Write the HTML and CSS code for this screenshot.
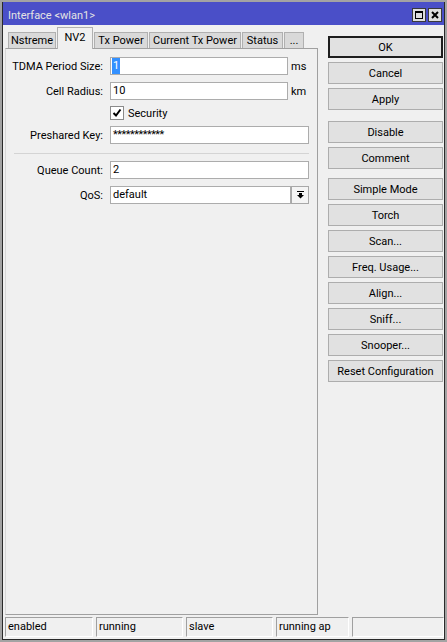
FILE: index.html
```html
<!DOCTYPE html>
<html>
<head>
<meta charset="utf-8">
<title>Interface &lt;wlan1&gt;</title>
<link rel="stylesheet" href="styles.css">
</head>
<body>
<div class="window">
  <div class="titlebar">
    <span class="title">Interface &lt;wlan1&gt;</span>
    <div class="tbtns">
      <span class="tbtn"><svg width="8" height="8" viewBox="0 0 8 8"><rect x="0.5" y="1" width="7" height="6.5" fill="none" stroke="#000" stroke-width="1"/><rect x="0" y="0" width="8" height="2" fill="#000"/></svg></span>
      <span class="tbtn"><svg width="8" height="8" viewBox="0 0 8 8"><path d="M1 1 L7 7 M7 1 L1 7" stroke="#000" stroke-width="2"/></svg></span>
    </div>
  </div>
  <div class="main">
    <div class="left">
      <div class="tabs">
        <span class="tab t-nstreme">Nstreme</span>
        <span class="tab active t-nv2">NV2</span>
        <span class="tab t-txp">Tx Power</span>
        <span class="tab t-ctxp">Current Tx Power</span>
        <span class="tab t-status">Status</span>
        <span class="tab t-more">...</span>
      </div>
      <div class="panel">
        <div class="row">
          <span class="label">TDMA Period Size:</span>
          <span class="input w-short"><span class="sel">1</span></span>
          <span class="unit">ms</span>
        </div>
        <div class="row gap7">
          <span class="label">Cell Radius:</span>
          <span class="input w-short">10</span>
          <span class="unit">km</span>
        </div>
        <div class="check-row">
          <span class="checkbox"><svg width="10" height="10" viewBox="0 0 10 10"><path d="M1.5 5 L4 7.5 L8.5 1.5" fill="none" stroke="#000" stroke-width="2"/></svg></span>
          <span class="check-label">Security</span>
        </div>
        <div class="row gap6">
          <span class="label">Preshared Key:</span>
          <span class="input w-full pw">************</span>
        </div>
        <div class="sep"></div>
        <div class="row gap7">
          <span class="label">Queue Count:</span>
          <span class="input w-full">2</span>
        </div>
        <div class="row gap7">
          <span class="label">QoS:</span>
          <span class="input w-select">default</span>
          <span class="dd-btn"><svg width="7" height="8" viewBox="0 0 7 8"><rect x="0" y="0" width="7" height="1" fill="#000"/><rect x="2" y="2" width="3" height="2" fill="#000"/><path d="M0 4 L7 4 L3.5 7.5 Z" fill="#000"/></svg></span>
        </div>
      </div>
    </div>
    <div class="buttons">
      <div class="btn default">OK</div>
      <div class="btn">Cancel</div>
      <div class="btn group-end">Apply</div>
      <div class="btn">Disable</div>
      <div class="btn group-end2">Comment</div>
      <div class="btn">Simple Mode</div>
      <div class="btn">Torch</div>
      <div class="btn">Scan...</div>
      <div class="btn">Freq. Usage...</div>
      <div class="btn">Align...</div>
      <div class="btn">Sniff...</div>
      <div class="btn">Snooper...</div>
      <div class="btn">Reset Configuration</div>
    </div>
  </div>
  <div class="status">
    <span class="cell c1">enabled</span>
    <span class="cell c2">running</span>
    <span class="cell c3">slave</span>
    <span class="cell c4">running ap</span>
    <span class="cell c5"></span>
  </div>
</div>
</body>
</html>
```
FILE: styles.css
```css
* { box-sizing: border-box; }
html, body { margin: 0; padding: 0; }
body {
  width: 447px;
  height: 642px;
  overflow: hidden;
  background: #a3a3a3;
  font-family: Roboto, "Liberation Sans", sans-serif;
  font-size: 11px;
  color: #000;
}
.window {
  margin: 2px 0 0 2px;
  width: 443px;
  height: 638px;
  border: 1px solid #2a2a2a;
  border-top: none;
  background: #f0f0f0;
  display: flex;
  flex-direction: column;
}
.titlebar {
  height: 23px;
  flex-shrink: 0;
  background: #4a4fc8;
  display: flex;
  align-items: center;
  justify-content: space-between;
  padding: 3px 2px 0 5px;
}
.title { color: #e4e4e4; font-size: 11px; }
.tbtns { display: flex; gap: 2px; }
.tbtn {
  width: 14px;
  height: 14px;
  border: 1px solid #3a3a3a;
  background: #dedede;
  display: flex;
  align-items: center;
  justify-content: center;
}
.tbtn svg { display: block; }
.main { display: flex; height: 590px; flex-shrink: 0; }
.left {
  width: 315px;
  padding-left: 2px;
  display: flex;
  flex-direction: column;
}
.tabs {
  height: 23px;
  display: flex;
  align-items: flex-end;
  gap: 1px;
  padding-left: 3px;
}
.tab {
  height: 16px;
  border: 1px solid #b0b0b0;
  border-bottom: none;
  background: #d9d9d9;
  text-align: center;
  line-height: 15px;
  white-space: nowrap;
  flex-shrink: 0;
}
.tab.active {
  height: 22px;
  margin-bottom: -1px;
  background: #f0f0f0;
  position: relative;
  z-index: 1;
  line-height: 19px;
}
.t-nstreme { width: 48px; }
.t-nv2 { width: 36px; }
.t-txp { width: 54px; }
.t-ctxp { width: 92px; }
.t-status { width: 41px; }
.t-more { width: 20px; }
.panel {
  flex: 1;
  border: 1px solid #a0a0a0;
  border-left-color: #d8d8d8;
  padding-top: 8px;
}
.row { display: flex; align-items: center; height: 18px; }
.gap7 { margin-top: 7px; }
.gap6 { margin-top: 6px; }
.label { width: 97px; margin-right: 7px; text-align: right; white-space: nowrap; }
.input {
  height: 18px;
  border: 1px solid #acacac;
  background: #fff;
  padding-left: 2px;
  line-height: 16px;
  white-space: nowrap;
  overflow: hidden;
}
.w-short { width: 178px; }
.w-full { width: 199px; }
.w-select { width: 181px; }
.pw { letter-spacing: -0.5px; }
.sel {
  display: inline-block;
  background: #3390ff;
  color: #fff;
  padding: 0 1px;
  margin-left: -1px;
  line-height: 16px;
}
.unit { margin-left: 3px; }
.check-row {
  display: flex;
  align-items: center;
  height: 14px;
  margin-top: 6px;
  padding-left: 104px;
}
.checkbox {
  width: 14px;
  height: 14px;
  border: 1px solid #8a8a8a;
  background: #fff;
  display: flex;
  align-items: center;
  justify-content: center;
}
.check-label { margin-left: 4px; }
.sep {
  height: 1px;
  margin: 9px 8px 0 8px;
  background: #d4d4d4;
}
.dd-btn {
  width: 18px;
  height: 18px;
  border: 1px solid #a8a8a8;
  background: #f4f4f4;
  display: flex;
  align-items: center;
  justify-content: center;
}
.buttons {
  width: 115px;
  margin-left: 10px;
  padding-top: 11px;
  display: flex;
  flex-direction: column;
}
.btn {
  height: 22px;
  margin-bottom: 4px;
  border: 1px solid #adadad;
  background: #e1e1e1;
  text-align: center;
  line-height: 21px;
  white-space: nowrap;
}
.btn.default { border: 2px solid #1e1e1e; line-height: 19px; }
.btn.group-end { margin-bottom: 11px; }
.btn.group-end2 { margin-bottom: 9px; }
.status {
  display: flex;
  gap: 3px;
  height: 20px;
  margin: 2px 0 0 2px;
}
.cell {
  height: 20px;
  border: 1px solid;
  border-color: #a0a0a0 #ffffff #ffffff #a0a0a0;
  padding-left: 2px;
  line-height: 18px;
  white-space: nowrap;
}
.c1 { width: 88px; }
.c2 { width: 87px; }
.c3 { width: 87px; }
.c4 { width: 73px; }
.c5 { width: 92px; }
```
